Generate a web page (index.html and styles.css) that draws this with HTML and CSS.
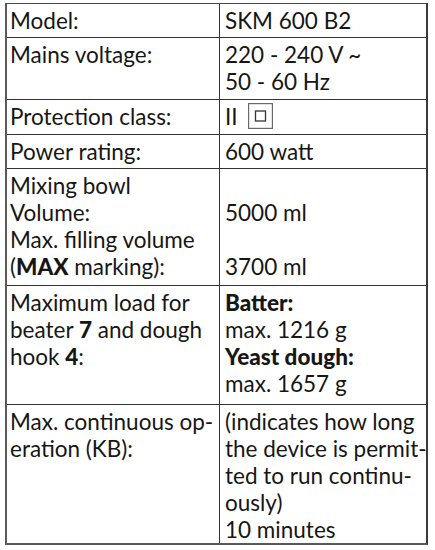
FILE: index.html
```html
<!DOCTYPE html>
<html lang="en">
<head>
<meta charset="utf-8">
<title>Technical data</title>
<link rel="stylesheet" href="styles.css">
</head>
<body>
<table class="spec">
  <colgroup><col class="col-label"><col class="col-value"></colgroup>
  <tbody>
    <tr class="r-model">
      <td class="label">Model:</td>
      <td class="value">SKM 600 B2</td>
    </tr>
    <tr class="r-mains">
      <td class="label">Mains voltage:</td>
      <td class="value">220 - 240 V ~<br>50 - 60 Hz</td>
    </tr>
    <tr class="r-prot">
      <td class="label">Protection class:</td>
      <td class="value">II<svg class="prot-icon" width="25" height="26" viewBox="0 0 25 26" aria-hidden="true"><rect x="0.6" y="0.6" width="23.8" height="24.8" fill="none" stroke="#6a6a6a" stroke-width="1.2"/><rect x="7.5" y="8" width="10" height="10" fill="none" stroke="#333" stroke-width="1.3"/></svg></td>
    </tr>
    <tr class="r-power">
      <td class="label">Power rating:</td>
      <td class="value">600 watt</td>
    </tr>
    <tr class="r-bowl">
      <td class="label">Mixing bowl<br>Volume:<br>Max. filling volume<br>(<b>MAX</b> marking):</td>
      <td class="value"><br>5000 ml<br><br>3700 ml</td>
    </tr>
    <tr class="r-load">
      <td class="label">Maximum load for<br>beater <b>7</b> and dough<br>hook <b>4</b>:</td>
      <td class="value"><b>Batter:</b><br>max. 1216 g<br><b>Yeast dough:</b><br>max. 1657 g</td>
    </tr>
    <tr class="r-kb">
      <td class="label">Max. continuous op-<br>eration (KB):</td>
      <td class="value">(indicates how long<br>the device is permit-<br>ted to run continu-<br>ously)<br>10 minutes</td>
    </tr>
  </tbody>
</table>
</body>
</html>
```

FILE: styles.css
```css
html, body {
  margin: 0;
  padding: 0;
  background: #ffffff;
}

body {
  font-family: "Lato", "Liberation Sans", sans-serif;
  font-size: 22.5px;
  line-height: 27px;
  color: #161616;
}

.spec {
  margin: 3px 0 0 5px;
  width: 423px;
  box-sizing: border-box;
  border-collapse: separate;
  border-spacing: 0;
  table-layout: fixed;
  border-top: 1px solid #4a4a4a;
  border-left: 2px solid #5a5a5a;
  border-right: 2px solid #3a3a3a;
  border-bottom: 2px solid #5a5a5a;
}

.col-label { width: 213px; }
.col-value { width: auto; }

.spec td {
  vertical-align: top;
  white-space: nowrap;
  padding: 3px 0 0 0;
  border-top: 1px solid #333;
}

.spec .r-model td {
  border-top: none;
  padding-top: 3px;
}

.spec td.label {
  padding-left: 3px;
  border-right: 1px solid #333;
}

.spec td.value {
  padding-left: 5px;
}

.spec b {
  font-weight: 900;
  line-height: 1;
}

.r-model { height: 33px; }
.r-mains { height: 62px; }
.r-prot  { height: 35px; }
.r-power { height: 34px; }
.r-bowl  { height: 117px; }
.r-load  { height: 119px; }
.r-kb    { height: 139px; }

.prot-icon {
  vertical-align: top;
  margin-left: 10px;
  margin-top: 0;
}
```
